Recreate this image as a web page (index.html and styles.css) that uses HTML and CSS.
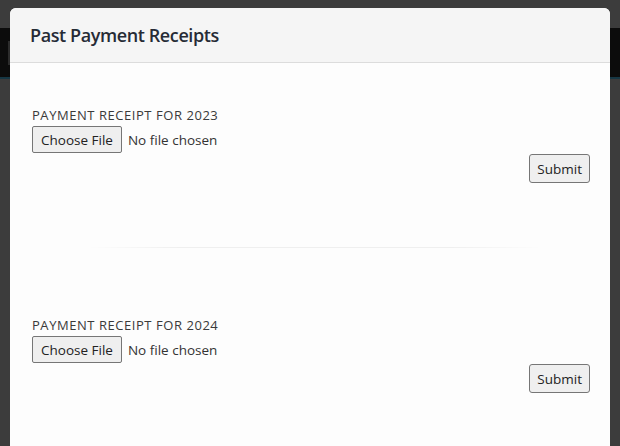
FILE: index.html
```html
<!DOCTYPE html>
<html>
<head>
<meta charset="utf-8">
<link rel="stylesheet" href="styles.css">
</head>
<body>
<div class="page">
  <div class="navbar"><span class="nav-item"></span></div>
</div>
<div class="modal">
  <div class="modal-header">
    <h2 class="modal-title">Past Payment Receipts</h2>
  </div>
  <div class="modal-body">
    <form class="receipt">
      <label class="receipt-label">PAYMENT RECEIPT FOR 2023</label>
      <input class="file-input" type="file">
      <div class="actions"><button class="submit" type="button">Submit</button></div>
    </form>
    <hr class="divider">
    <form class="receipt">
      <label class="receipt-label">PAYMENT RECEIPT FOR 2024</label>
      <input class="file-input" type="file">
      <div class="actions"><button class="submit" type="button">Submit</button></div>
    </form>
  </div>
</div>
</body>
</html>
```
FILE: styles.css
```css
html, body {
  margin: 0;
  padding: 0;
  height: 100%;
  overflow: hidden;
}
body {
  background: #3c3c3c;
  font-family: "Open Sans", "Noto Sans", sans-serif;
}
.page {
  padding-top: 28px;
}
.navbar {
  height: 49px;
  background: #0c0c0c;
  border-bottom: 2px solid #163744;
  display: flex;
  align-items: center;
  padding-left: 8px;
}
.nav-item {
  display: block;
  width: 4px;
  height: 24px;
  background: #2c2c2c;
}
.modal {
  position: absolute;
  top: 8px;
  left: 10px;
  width: 600px;
  height: 460px;
  background: #fdfdfd;
  border-radius: 6px 6px 0 0;
  overflow: hidden;
}
.modal-header {
  height: 54px;
  background: #f5f5f5;
  border-bottom: 1px solid #dcdcdc;
  display: flex;
  align-items: center;
  padding: 0 20px;
}
.modal-title {
  margin: 0;
  font-size: 18px;
  font-weight: 600;
  color: #262b36;
  letter-spacing: -0.4px;
}
.modal-body {
  padding: 43px 20px 0 22px;
}
.receipt {
  display: flex;
  flex-direction: column;
  align-items: flex-start;
}
.receipt-label {
  font-size: 13px;
  line-height: 18px;
  letter-spacing: 0.55px;
  color: #3a3a3a;
  margin-bottom: 2px;
}
.file-input {
  font-family: inherit;
  font-size: 13.5px;
  color: #333;
  height: 27px;
}
.file-input::file-selector-button {
  font-family: inherit;
  font-size: 13.5px;
  height: 27px;
  padding: 0 8px;
  margin-right: 6px;
  background: #efefef;
  border: 1px solid #767676;
  border-radius: 2px;
  color: #222;
}
.actions {
  align-self: stretch;
  display: flex;
  justify-content: flex-end;
  margin-top: 1px;
}
.submit {
  font-family: inherit;
  font-size: 13.5px;
  height: 29px;
  padding: 0 7px;
  background: #efefef;
  border: 1px solid #767676;
  border-radius: 3px;
  color: #222;
}
.divider {
  border: 0;
  height: 1px;
  margin: 64px 48px 68px 56px;
  background: linear-gradient(to right, rgba(0,0,0,0), rgba(0,0,0,0.055) 20%, rgba(0,0,0,0.055) 80%, rgba(0,0,0,0));
}
```
